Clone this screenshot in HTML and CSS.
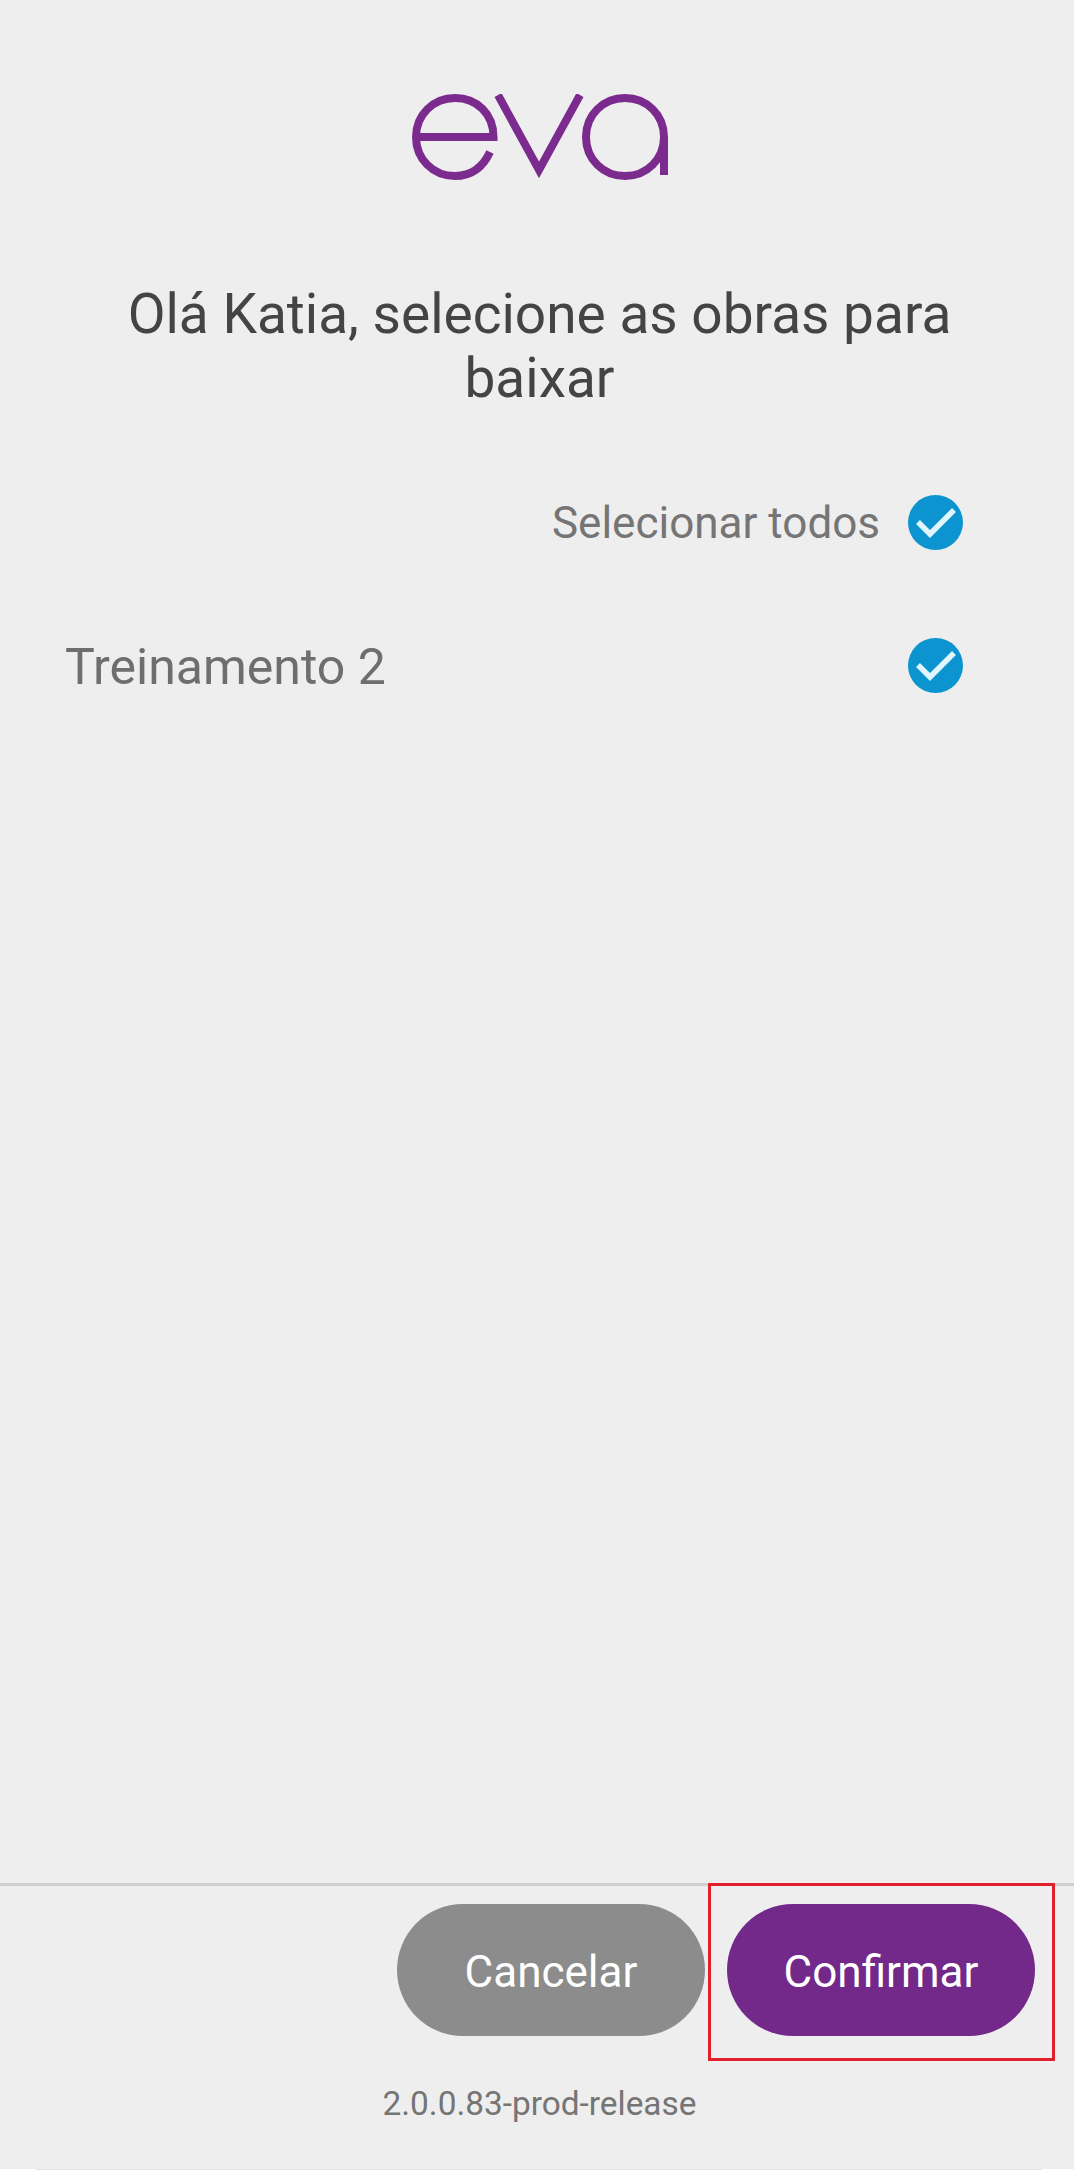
FILE: index.html

```html
<!DOCTYPE html>
<html lang="pt-BR">
<head>
  <meta charset="UTF-8">
  <title>Eva - Selecionar obras</title>
  <link rel="stylesheet" href="styles.css">
</head>
<body>
  <div class="screen">
    <header class="logo-wrap">
      <svg class="logo" viewBox="0 0 256 86" width="256" height="86" aria-label="eva">
        <path d="M5 43H81.5C81.5 20 65 4 43 4C21 4 4 21 4 43C4 65 21 82 43 82C60 82 71 73 78 58" />
        <path d="M86 1L127 76L168 1" />
        <path d="M252 81V43C252 21 235 4 213 4C191 4 174 21 174 43C174 65 191 82 213 82C235 82 252 65 252 43" />
      </svg>
    </header>

    <h1 class="title">Olá Katia, selecione as obras para baixar</h1>

    <div class="row row-all">
      <span class="row-label">Selecionar todos</span>
      <span class="check">
        <svg viewBox="0 0 55 55" width="55" height="55"><path d="M10 27L22 39L46 15" /></svg>
      </span>
    </div>

    <div class="row row-item">
      <span class="row-label row-label-item">Treinamento 2</span>
      <span class="check">
        <svg viewBox="0 0 55 55" width="55" height="55"><path d="M10 27L22 39L46 15" /></svg>
      </span>
    </div>

    <footer class="footer">
      <div class="actions">
        <button class="btn btn-cancel">Cancelar</button>
        <button class="btn btn-confirm">Confirmar</button>
        <div class="highlight"></div>
      </div>
      <div class="version">2.0.0.83-prod-release</div>
    </footer>
  </div>
  <div class="bottom-edge"></div>
</body>
</html>
```

FILE: styles.css

```css
* {
  box-sizing: border-box;
}

body {
  margin: 0;
  background: #ffffff;
  font-family: Roboto, sans-serif;
}

.screen {
  display: flex;
  flex-direction: column;
  height: 2169px;
  background: #eeeeee;
}

.bottom-edge {
  height: 1px;
  margin: 0 32px 0 36px;
  background: #e2e2e2;
}

.logo-wrap {
  display: flex;
  justify-content: center;
  padding-top: 94px;
  padding-left: 5px;
}

.logo path {
  fill: none;
  stroke: #7b2a8e;
  stroke-width: 8;
}

.title {
  margin: 102px 60px 0 65px;
  font-size: 55px;
  font-weight: 400;
  line-height: 64px;
  text-align: center;
  color: #444444;
}

.row {
  display: flex;
  align-items: center;
  height: 55px;
  padding: 0 111px 0 65px;
}

.row-all {
  justify-content: flex-end;
  gap: 28px;
  margin-top: 85px;
}

.row-item {
  justify-content: space-between;
  margin-top: 88px;
}

.row-label {
  font-size: 44px;
  color: #757575;
}

.row-label-item {
  padding-top: 3px;
  font-size: 50px;
  color: #6e6e6e;
}

.check {
  width: 55px;
  height: 55px;
  border-radius: 50%;
  background: #0b94d0;
}

.check svg {
  display: block;
}

.check path {
  fill: none;
  stroke: #dff6ff;
  stroke-width: 5.5;
}

.footer {
  margin-top: auto;
  height: 286px;
  border-top: 3px solid #cfcfcf;
}

.actions {
  position: relative;
  display: flex;
  justify-content: flex-end;
  gap: 22px;
  padding: 18px 39px 0 0;
}

.btn {
  width: 308px;
  height: 132px;
  padding-top: 5px;
  border: none;
  border-radius: 66px;
  font-family: inherit;
  font-size: 44px;
  color: #ffffff;
}

.btn-cancel {
  background: #8c8c8c;
}

.btn-confirm {
  background: #72298a;
}

.highlight {
  position: absolute;
  top: -3px;
  left: 708px;
  width: 347px;
  height: 178px;
  border: 3px solid #e0202c;
}

.version {
  margin-top: 46px;
  padding-left: 5px;
  font-size: 33.4px;
  line-height: 44px;
  text-align: center;
  color: #757575;
}
```
